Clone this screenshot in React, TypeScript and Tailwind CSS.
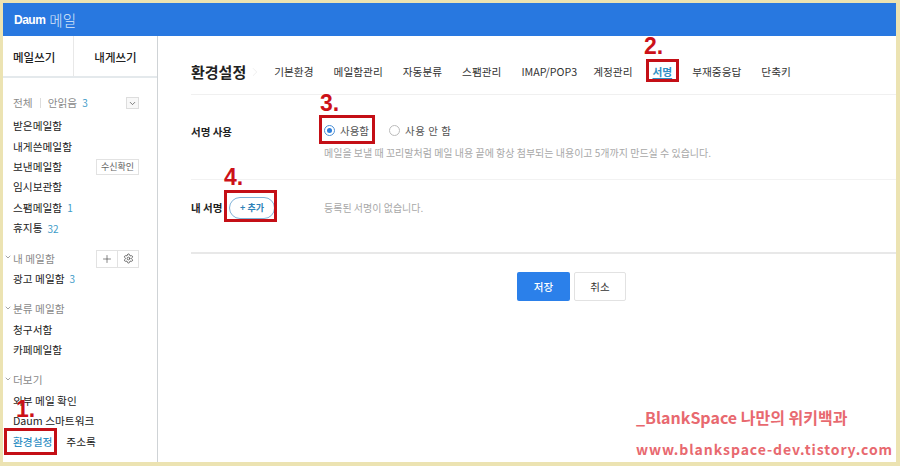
import {Plus, Settings, ChevronDown, ChevronRight} from 'lucide-react';

const FONT = '"Noto Sans CJK KR", "Noto Sans", sans-serif';

const TABS = [
  {label: '기본환경'},
  {label: '메일함관리'},
  {label: '자동분류'},
  {label: '스팸관리'},
  {label: 'IMAP/POP3', tight: true},
  {label: '계정관리'},
  {label: '서명', active: true},
  {label: '부재중응답'},
  {label: '단축키'},
];

function Count({n}: {n: string}) {
  return <span className="ml-[5px] text-[10px] text-[#3f9cc8]">{n}</span>;
}

function Row({children, mb}: {children: React.ReactNode; mb?: string}) {
  return (
    <div className={`flex h-[20.4px] items-center pl-[10px] pr-[18px] text-[10.7px] text-[#222] ${mb ?? ''}`}>
      {children}
    </div>
  );
}

function Heading({children, right}: {children: React.ReactNode; right?: React.ReactNode}) {
  return (
    <div className="relative flex h-[20.4px] items-center justify-between pl-[10px] pr-[18px] text-[10.7px] text-[#8a8a8a]">
      <ChevronDown size={8} strokeWidth={2} className="absolute left-[1px] top-[5px] text-[#777]" />
      <span>{children}</span>
      {right}
    </div>
  );
}

function Mark({n, className}: {n: string; className: string}) {
  return (
    <span className={`absolute text-[23px] font-bold leading-none text-[#cc1118] ${className}`} style={{fontFamily: '"Liberation Sans", sans-serif'}}>
      {n}
    </span>
  );
}

function Box({className}: {className: string}) {
  return <div className={`absolute border-[3px] border-[#c40f16] ${className}`} />;
}

function Sidebar() {
  return (
    <aside className="flex w-[155px] shrink-0 flex-col border-r border-[#cfd3d6]">
      <div className="flex h-[42px] shrink-0 border-b-2 border-[#e4e9ec] pt-[3px] text-[11.5px] font-medium text-[#222]">
        <div className="-mt-[3px] flex w-[71px] items-center border-r border-[#e8e8e8] pl-[10px] pt-[3px]">메일쓰기</div>
        <div className="flex flex-1 items-center justify-center">내게쓰기</div>
      </div>
      <div className="flex flex-col pt-[15px]">
        <div className="flex h-[20px] items-center justify-between pl-[10px] pr-[18px] text-[10.7px] text-[#8a8a8a]">
          <span className="flex items-center">
            전체
            <span className="mx-[7px] h-[10px] w-px bg-[#ddd]" />
            안읽음
            <Count n="3" />
          </span>
          <span className="flex h-[12px] w-[13px] items-center justify-center border border-[#ddd] bg-[#f8f8f8]">
            <ChevronDown size={9} strokeWidth={2} className="text-[#555]" />
          </span>
        </div>
        <div className="mt-[3px]">
          <Row>받은메일함</Row>
          <Row>내게쓴메일함</Row>
          <Row>
            <span className="flex-1">보낸메일함</span>
            <span className="flex h-[16px] w-[43px] items-center justify-center border border-[#e2e2e2] text-[9px] text-[#666]">수신확인</span>
          </Row>
          <Row>임시보관함</Row>
          <Row>스팸메일함<Count n="1" /></Row>
          <Row mb="mb-[10px]">휴지통<Count n="32" /></Row>
          <Heading
            right={
              <span className="flex h-[18px] w-[43px] border border-[#e2e2e2] text-[#444]">
                <span className="flex flex-1 items-center justify-center border-r border-[#e2e2e2]">
                  <Plus size={12} strokeWidth={1.3} />
                </span>
                <span className="flex flex-1 items-center justify-center">
                  <Settings size={11} strokeWidth={1.6} />
                </span>
              </span>
            }
          >
            내 메일함
          </Heading>
          <Row mb="mb-[10px]">광고 메일함<Count n="3" /></Row>
          <Heading>분류 메일함</Heading>
          <Row>청구서함</Row>
          <Row mb="mb-[10px]">카페메일함</Row>
          <Heading>더보기</Heading>
          <Row>외부 메일 확인</Row>
          <Row>Daum 스마트워크</Row>
          <Row>
            <span className="font-medium text-[#2f8fc4]">환경설정</span>
            <span className="ml-[14px]">주소록</span>
          </Row>
        </div>
      </div>
    </aside>
  );
}

function SettingsForm() {
  return (
    <main className="min-w-0 flex-1 pl-[33px]">
      <div className="flex h-[59px] items-center border-b border-[#f0f0f0] pt-[14px]">
        <h1 className="shrink-0 text-[15px] font-bold text-[#222]">환경설정</h1>
        <ChevronRight size={14} strokeWidth={1} className="ml-[2px] mr-[12px] shrink-0 text-[#e4e4e4]" />
        <div className="flex gap-[20px]">
          {TABS.map((t) => (
            <span
              key={t.label}
              className={`shrink-0 text-[10.7px] ${t.tight ? '-mr-[4px]' : ''} ${t.active ? 'font-bold text-[#2f8fc4] underline underline-offset-2' : 'text-[#333]'}`}
            >
              {t.label}
            </span>
          ))}
        </div>
      </div>

      <section className="flex h-[85px] border-b border-[#f2f2f2] pt-[28px]">
        <div className="w-[133px] shrink-0 pt-px text-[10.5px] font-bold text-[#222]">서명 사용</div>
        <div>
          <div className="flex items-center text-[10.5px] text-[#555]">
            <span className="flex h-[11px] w-[11px] items-center justify-center rounded-full border border-[#4a8fd6]">
              <span className="h-[5px] w-[5px] rounded-full bg-[#2d7fdc]" />
            </span>
            <span className="ml-[5px]">사용함</span>
            <span className="ml-[20px] h-[11px] w-[11px] rounded-full border border-[#bbb]" />
            <span className="ml-[5px] tracking-[0.5px]">사용 안 함</span>
          </div>
          <p className="mt-[6px] whitespace-nowrap text-[10px] text-[#a8a8a8]">
            메일을 보낼 때 꼬리말처럼 메일 내용 끝에 항상 첨부되는 내용이고 5개까지 만드실 수 있습니다.
          </p>
        </div>
      </section>

      <section className="flex h-[74px] items-start border-b-2 border-[#e8e8e8] pt-[17px]">
        <div className="w-[38px] shrink-0 pt-[3px] text-[10.5px] font-bold text-[#222]">내 서명</div>
        <button className="flex h-[22px] w-[46px] shrink-0 items-center justify-center rounded-full border border-[#7fb2d8] text-[9px] font-bold text-[#2f82b8]">
          + 추가
        </button>
        <p className="ml-[49px] pt-[3px] text-[10px] text-[#a8a8a8]">등록된 서명이 없습니다.</p>
      </section>

      <div className="flex gap-[4px] pl-[326px] pt-[18px]">
        <button className="flex h-[29px] w-[53px] items-center justify-center rounded-[2px] bg-[#2b80ea] text-[10.5px] font-medium text-white">저장</button>
        <button className="flex h-[29px] w-[52px] items-center justify-center rounded-[2px] border border-[#e2e2e2] text-[10.5px] text-[#333]">취소</button>
      </div>
    </main>
  );
}

export default function App() {
  return (
    <div className="relative h-[466px] w-[900px] overflow-hidden bg-[#ece3b2] pb-[4px] pl-[3px] pr-[4px] pt-[3px]" style={{fontFamily: FONT}}>
      <div className="flex h-full flex-col bg-white">
        <header className="flex h-[33px] shrink-0 items-center bg-[#2878e0] pl-[11px] text-white">
          <span className="text-[12px] font-black tracking-[-0.5px]" style={{fontFamily: '"Liberation Sans", sans-serif'}}>Daum</span>
          <span className="ml-[4px] text-[14.5px] font-light text-[#dbe8fa]">메일</span>
        </header>
        <div className="flex min-h-0 flex-1">
          <Sidebar />
          <SettingsForm />
        </div>
      </div>

      <Box className="left-[4px] top-[428px] h-[27px] w-[53px]" />
      <Mark n="1." className="left-[16px] top-[398px]" />
      <Box className="left-[646px] top-[59px] h-[23px] w-[33px]" />
      <Mark n="2." className="left-[644px] top-[35px]" />
      <Box className="left-[319px] top-[115px] h-[29px] w-[56px]" />
      <Mark n="3." className="left-[320px] top-[92px]" />
      <Box className="left-[224px] top-[190px] h-[32px] w-[53px]" />
      <Mark n="4." className="left-[224px] top-[166px]" />

      <div className="absolute left-[636px] top-[409px] text-[16px] font-semibold leading-none text-[#e8696f]">_BlankSpace 나만의 위키백과</div>
      <div className="absolute left-[636px] top-[442px] text-[14px] font-semibold leading-none tracking-[0.92px] text-[#e8696f]">www.blankspace-dev.tistory.com</div>
    </div>
  );
}
